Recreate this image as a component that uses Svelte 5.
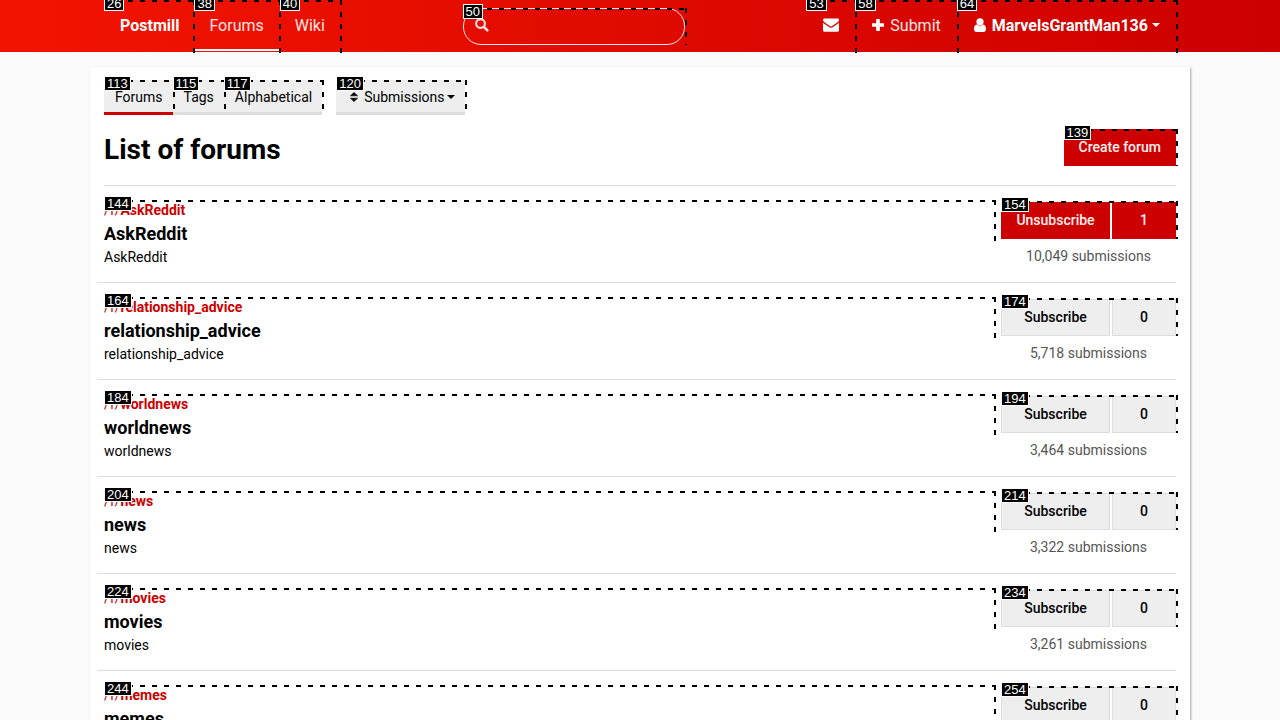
<script>
  const forums = [
    { name: 'AskReddit', count: '10,049', subs: 1, joined: true, a: 144, b: 154 },
    { name: 'relationship_advice', count: '5,718', subs: 0, joined: false, a: 164, b: 174 },
    { name: 'worldnews', count: '3,464', subs: 0, joined: false, a: 184, b: 194 },
    { name: 'news', count: '3,322', subs: 0, joined: false, a: 204, b: 214 },
    { name: 'movies', count: '3,261', subs: 0, joined: false, a: 224, b: 234 },
    { name: 'memes', count: '3,198', subs: 0, joined: false, a: 244, b: 254 }
  ];
</script>

{#snippet mark(id)}
  <span class="mark"><span class="tag">{id}</span></span>
{/snippet}

<div class="page">
  <header>
    <nav class="bar">
      <div class="group start">
        <a class="item brand" href="#home">Postmill{@render mark(26)}</a>
        <a class="item current" href="#forums">Forums{@render mark(38)}</a>
        <a class="item" href="#wiki">Wiki{@render mark(40)}</a>
      </div>
      <form class="search">
        <svg width="14" height="14" viewBox="0 0 14 14" aria-hidden="true"><circle cx="5.5" cy="5.5" r="4.4" fill="none" stroke="currentColor" stroke-width="2.1" /><path d="M9 9l3.400 3.400" stroke="currentColor" stroke-width="2.5" stroke-linecap="round" /></svg>
        <input type="search" aria-label="Search" />
        {@render mark(50)}
      </form>
      <div class="group end">
        <a class="item mail" href="#inbox" aria-label="Inbox">
          <svg width="16" height="14" viewBox="0 0 16 14" aria-hidden="true"><path fill="currentColor" d="M1.4.5h13.2c.8 0 1.4.6 1.4 1.4 0 1-.7 1.8-1.5 2.400L9.600 7.700C9.100 8.100 8.500 8.500 8 8.500s-1.100-.4-1.600-.8L1.500 4.300C.8 3.800 0 2.800 0 2 0 1.100.6.5 1.400.5zM0 4.700c.3.300.6.600.9.800l4.700 3.300c.7.500 1.500 1 2.400 1s1.700-.5 2.400-1l4.700-3.300c.3-.2.600-.5.900-.8v7.600c0 .8-.6 1.400-1.400 1.400H1.400C.6 13.700 0 13.100 0 12.300z" /></svg>
          {@render mark(53)}
        </a>
        <a class="item" href="#submit">
          <svg width="12" height="12" viewBox="0 0 13 13" aria-hidden="true"><path fill="currentColor" d="M5 0h3q.5 0 .5.500v4h4q.5 0 .5.500v3q0 .5-.5.500h-4v4q0 .5-.5.500H5q-.5 0-.5-.5v-4h-4Q0 8.500 0 8V5q0-.5.500-.5h4v-4Q4.500 0 5 0z" /></svg>
          Submit{@render mark(58)}
        </a>
        <button class="item user" type="button">
          <svg width="12" height="14" viewBox="0 0 12 14" aria-hidden="true"><circle cx="6" cy="3.800" r="3.600" fill="currentColor" /><path fill="currentColor" d="M2.800 6.500Q6 9.200 9.200 6.500C11.300 6.800 12 9 12 11.300 12 12.900 11 14 9.600 14H2.400C1 14 0 12.900 0 11.300 0 9 .7 6.800 2.800 6.500z" /></svg>
          MarvelsGrantMan136 <i class="caret"></i>{@render mark(64)}
        </button>
      </div>
    </nav>
  </header>

  <main>
    <div class="tabs">
      <nav class="tabset">
        <a class="tab active" href="#all">Forums{@render mark(113)}</a>
        <a class="tab" href="#tags">Tags{@render mark(115)}</a>
        <a class="tab" href="#alphabetical">Alphabetical{@render mark(117)}</a>
      </nav>
      <button class="tab sort" type="button">
        <svg width="8" height="10" viewBox="0 0 8 10" aria-hidden="true"><path fill="currentColor" stroke="currentColor" stroke-width=".6" stroke-linejoin="round" d="M.4 3.800L4 .4l3.600 3.400zM.4 6.200h7.200L4 9.600z" /></svg>
        Submissions <i class="caret"></i>{@render mark(120)}
      </button>
    </div>

    <div class="title">
      <h1>List of forums</h1>
      <a class="create" href="#create">Create forum{@render mark(139)}</a>
    </div>

    {#each forums as f}
      <article>
        <div class="info">
          <a class="head" href="#{f.name}">
            <span class="path">/f/<b>{f.name}</b></span>
            <span class="name">{f.name}</span>
            {@render mark(f.a)}
          </a>
          <p>{f.name}</p>
        </div>
        <div class="side">
          <button class="sub" class:joined={f.joined} type="button">
            <span class="label">{f.joined ? 'Unsubscribe' : 'Subscribe'}</span>
            <span class="num">{f.subs}</span>
            {@render mark(f.b)}
          </button>
          <span class="count">{f.count} submissions</span>
        </div>
      </article>
    {/each}
  </main>
</div>

<style>
  :global(body) { margin: 0; background: #fafafa; }
  * { box-sizing: border-box; }
  .page { height: 100vh; overflow: hidden; font: 14px/21px Roboto, sans-serif; color: #000; }
  a { color: inherit; text-decoration: none; }
  button { font: inherit; color: inherit; background: none; border: 0; padding: 0; }
  svg { display: block; flex: none; }

  /* numbered marker: dashes along the top and right edges */
  .mark {
    position: absolute; inset: 0 -2px 0 0; pointer-events: none; z-index: 1;
    background:
      repeating-linear-gradient(to right, #000 0 5px, transparent 5px 12px) top / 100% 2px no-repeat,
      repeating-linear-gradient(to bottom, #000 0 5px, transparent 5px 12px) right / 2px 100% no-repeat;
  }
  .tag { position: absolute; top: -4px; left: 0; padding: 0 2px; border: 1px solid #fff; background: #000; color: #fff; font: 400 13px/13px "Liberation Sans", sans-serif; }

  header { height: 52px; background: linear-gradient(to right, #f31400, #c00); color: #fff; }
  .bar { display: flex; justify-content: space-between; max-width: 1100px; margin: 0 auto; padding: 0 14px; }
  .group { display: flex; }
  .item { position: relative; display: flex; align-items: center; gap: 6px; height: 52px; padding: 0 16px 2px 15px; font-size: 16px; color: #ffe5e5; }
  .end .item { padding-left: 17px; }
  .item .mark { bottom: -1px; }
  .start .mark { right: -1px; }
  .start .brand { padding: 0 15px 2px 16px; font-weight: 700; color: #fff; }
  .current::after { content: ""; position: absolute; left: 0; right: 0; bottom: 1px; height: 2px; background: #fff; }
  .item svg { color: #fff; }
  .user { font-weight: 700; color: #fff; }
  .caret { border: 4px solid transparent; border-top-color: currentColor; border-bottom: 0; }
  .search { position: relative; width: 222px; height: 37px; margin-top: 8px; }
  .search input { width: 100%; height: 100%; padding: 0 16px 0 34px; border: 1px solid #ffe5e5; border-radius: 18px; background: none; color: #fff; font: inherit; outline: 0; }
  .search svg { position: absolute; left: 12px; top: 10px; color: #ffe5e5; }

  main { max-width: 1100px; margin: 15px auto 0; padding: 13px 14px; background: #fff; box-shadow: 1px 1px 2px rgba(0, 0, 0, .35); }
  .tabs { display: flex; gap: 14px; }
  .tabset { display: flex; }
  .tab { position: relative; display: flex; align-items: center; height: 35px; padding: 2px 10px 0 11px; background: #eee; border-bottom: 3px solid #ddd; }
  .active { border-color: #c00; }
  .sort { gap: 6px; padding: 2px 10px 0 14px; }
  .user .caret { margin-left: -2px; }
  .sort .caret { margin-left: -4px; }

  .title { display: flex; justify-content: space-between; align-items: flex-start; height: 70px; padding-top: 14px; }
  h1 { margin: 0; font-size: 28px; line-height: 42px; font-weight: 700; }
  .create { position: relative; padding: 8px 15px; background: #c00; color: #fff0f0; font-weight: 500; }

  article { display: flex; justify-content: space-between; gap: 7px; height: 97px; margin-left: -7px; padding: 14px 0 0 7px; border-top: 1px solid #ddd; }
  .title + article { margin-left: 0; padding-left: 0; }
  .info { flex: 1; }
  .head { position: relative; display: block; height: 47px; }
  .head .mark { bottom: 6px; }
  .path { display: block; line-height: 20px; color: #c00; }
  .name { display: block; font-size: 18px; line-height: 27px; font-weight: 700; }
  p { margin: 0; }
  .side { width: 175px; text-align: center; padding-top: 2px; }
  .sub { position: relative; display: flex; gap: 2px; width: 100%; height: 37px; font-weight: 500; }
  .sub .mark { top: -1px; }
  .label, .num { display: flex; align-items: center; justify-content: center; height: 37px; background: #eee; border: 1px solid #ddd; }
  .label { width: 109px; }
  .num { flex: 1; }
  .joined .label, .joined .num { background: #c00; border-color: #c00; color: #fff0f0; }
  .count { display: block; margin-top: 7px; color: #555; }
</style>
